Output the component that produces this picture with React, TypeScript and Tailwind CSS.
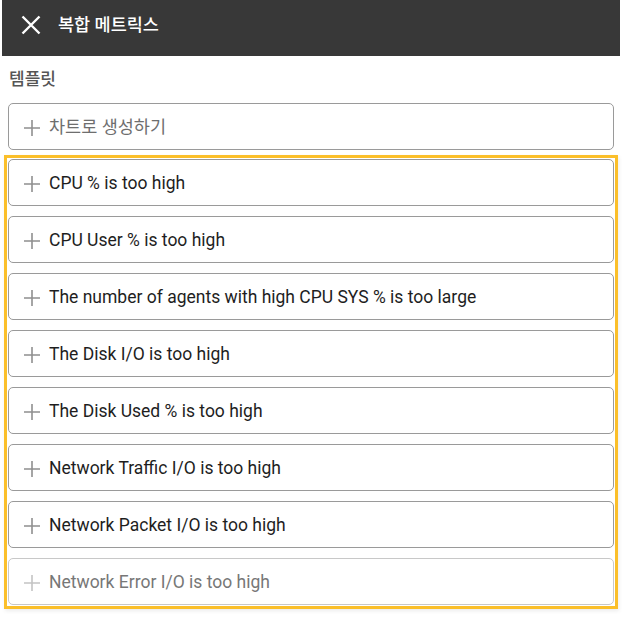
import React from "react";

const items = [
  "CPU % is too high",
  "CPU User % is too high",
  "The number of agents with high CPU SYS % is too large",
  "The Disk I/O is too high",
  "The Disk Used % is too high",
  "Network Traffic I/O is too high",
  "Network Packet I/O is too high",
  "Network Error I/O is too high",
];

function Plus({ light }: { light?: boolean }) {
  return (
    <svg width="18" height="18" viewBox="0 0 18 18" className="shrink-0">
      <path
        d="M9 1v16M1 9h16"
        stroke={light ? "#c4c4c4" : "#8f8f8f"}
        strokeWidth="1.6"
        fill="none"
      />
    </svg>
  );
}

function Row({ text, muted, dim }: { text: string; muted?: boolean; dim?: boolean }) {
  return (
    <div
      className={`flex h-[47px] items-center gap-[8px] rounded-[5px] border bg-white pl-[14px] pt-[2px] ${
        dim ? "border-[#c8c8c8]" : "border-[#9a9a9a]"
      }`}
    >
      <Plus light={dim} />
      <span
        className={`text-[17.5px] leading-none ${
          muted ? "text-[#6e6e6e]" : dim ? "text-[#777777]" : "text-[#1e1e1e]"
        }`}
      >
        {text}
      </span>
    </div>
  );
}

export default function App() {
  return (
    <div
      className="h-[619px] w-[622px] bg-white px-[2px]"
      style={{ fontFamily: "Roboto, 'Noto Sans CJK KR', sans-serif" }}
    >
      <div className="flex h-[56px] items-center gap-[17px] bg-[#383838] pb-[6px] pl-[19px]">
        <svg width="20" height="20" viewBox="0 0 20 20">
          <path d="M1.5 1.5L18.5 18.5M18.5 1.5L1.5 18.5" stroke="#ffffff" strokeWidth="2.4" fill="none" />
        </svg>
        <span className="text-[17.5px] font-medium text-white">복합 메트릭스</span>
      </div>
      <div className="px-[6px] pt-[11px]">
        <div className="pl-[1px] pt-[1px] text-[17px] font-medium leading-[22px] text-[#555555]">템플릿</div>
        <div className="mt-[13px]">
          <Row text="차트로 생성하기" muted />
        </div>
      </div>
      <div className="mx-[2px] mt-[5px] flex flex-col gap-[10px] border-[3px] border-[#fbbf2a] px-[1px] pt-[1px] pb-[1px] shadow-[1px_2px_4px_rgba(0,0,0,0.08)]">
        {items.map((t, i) => (
          <Row key={t} text={t} dim={i === items.length - 1} />
        ))}
      </div>
    </div>
  );
}
